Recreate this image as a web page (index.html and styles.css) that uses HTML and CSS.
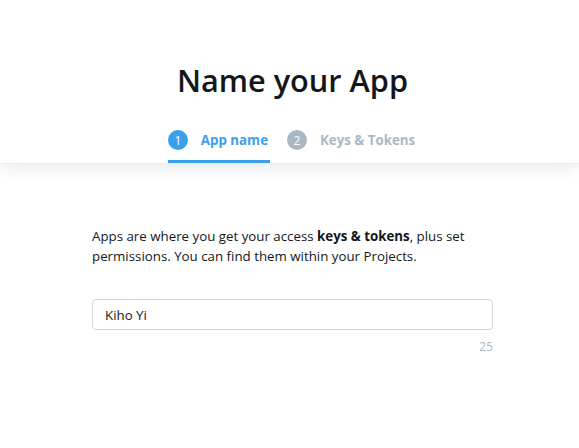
FILE: index.html
```html
<!DOCTYPE html>
<html>
<head>
<meta charset="utf-8">
<link rel="stylesheet" href="styles.css">
</head>
<body>
<header class="header">
  <h1 class="title">Name your App</h1>
  <nav class="steps">
    <div class="step active"><span class="num">1</span><span class="label">App name</span></div>
    <div class="step"><span class="num">2</span><span class="label">Keys &amp; Tokens</span></div>
  </nav>
</header>
<main class="content">
  <p class="intro">Apps are where you get your access <strong class="strong">keys &amp; tokens</strong>, plus set permissions. You can find them within your Projects.</p>
  <div class="field">
    <input class="input" type="text" value="Kiho Yi">
    <div class="count">25</div>
  </div>
</main>
</body>
</html>
```
FILE: styles.css
```css
* { box-sizing: border-box; }
html, body { margin: 0; padding: 0; background: #fff; }
body {
  font-family: "Open Sans", "Noto Sans", sans-serif;
  color: #14171a;
  width: 579px;
  height: 448px;
  overflow: hidden;
}
.header {
  background: #fff;
  padding-left: 6px;
  position: relative;
  box-shadow: 0 2px 18px rgba(101, 119, 134, 0.18);
  border-bottom: 1px solid #e6ecf0;
}
.title {
  margin: 0;
  padding-top: 60px;
  text-align: center;
  font-size: 30.7px;
  font-weight: 600;
  line-height: 40px;
  color: #14171a;
}
.steps {
  display: flex;
  justify-content: center;
  gap: 17px;
  margin-top: 26px;
}
.step {
  display: flex;
  align-items: center;
  gap: 13px;
  height: 37px;
  padding-bottom: 6px;
  padding-right: 2px;
  border-bottom: 3px solid transparent;
  font-size: 13.3px;
  font-weight: 700;
  color: #aab8c2;
}
.step.active { color: #3ba0ec; border-bottom-color: #3ba0ec; }
.num {
  width: 20px; height: 20px;
  border-radius: 50%;
  background: #aab8c2;
  color: #fff;
  font-size: 12px;
  font-weight: 400;
  display: flex; align-items: center; justify-content: center;
}
.step.active .num { background: #3ba0ec; }
.content {
  width: 401px;
  margin: 0 auto;
  position: relative;
  left: 3px;
  padding-top: 62px;
}
.intro {
  margin: 0;
  font-size: 13.3px;
  line-height: 20px;
  color: #14171a;
}
.strong { font-weight: 700; }
.field { margin-top: 33px; }
.input {
  display: block;
  width: 100%;
  height: 31px;
  border: 1px solid #ccd6dd;
  border-radius: 4px;
  padding: 0 12px;
  font-family: inherit;
  font-size: 13.3px;
  color: #14171a;
  outline: none;
}
.count {
  text-align: right;
  font-size: 12px;
  color: #aab8c2;
  margin-top: 8px;
}
```
